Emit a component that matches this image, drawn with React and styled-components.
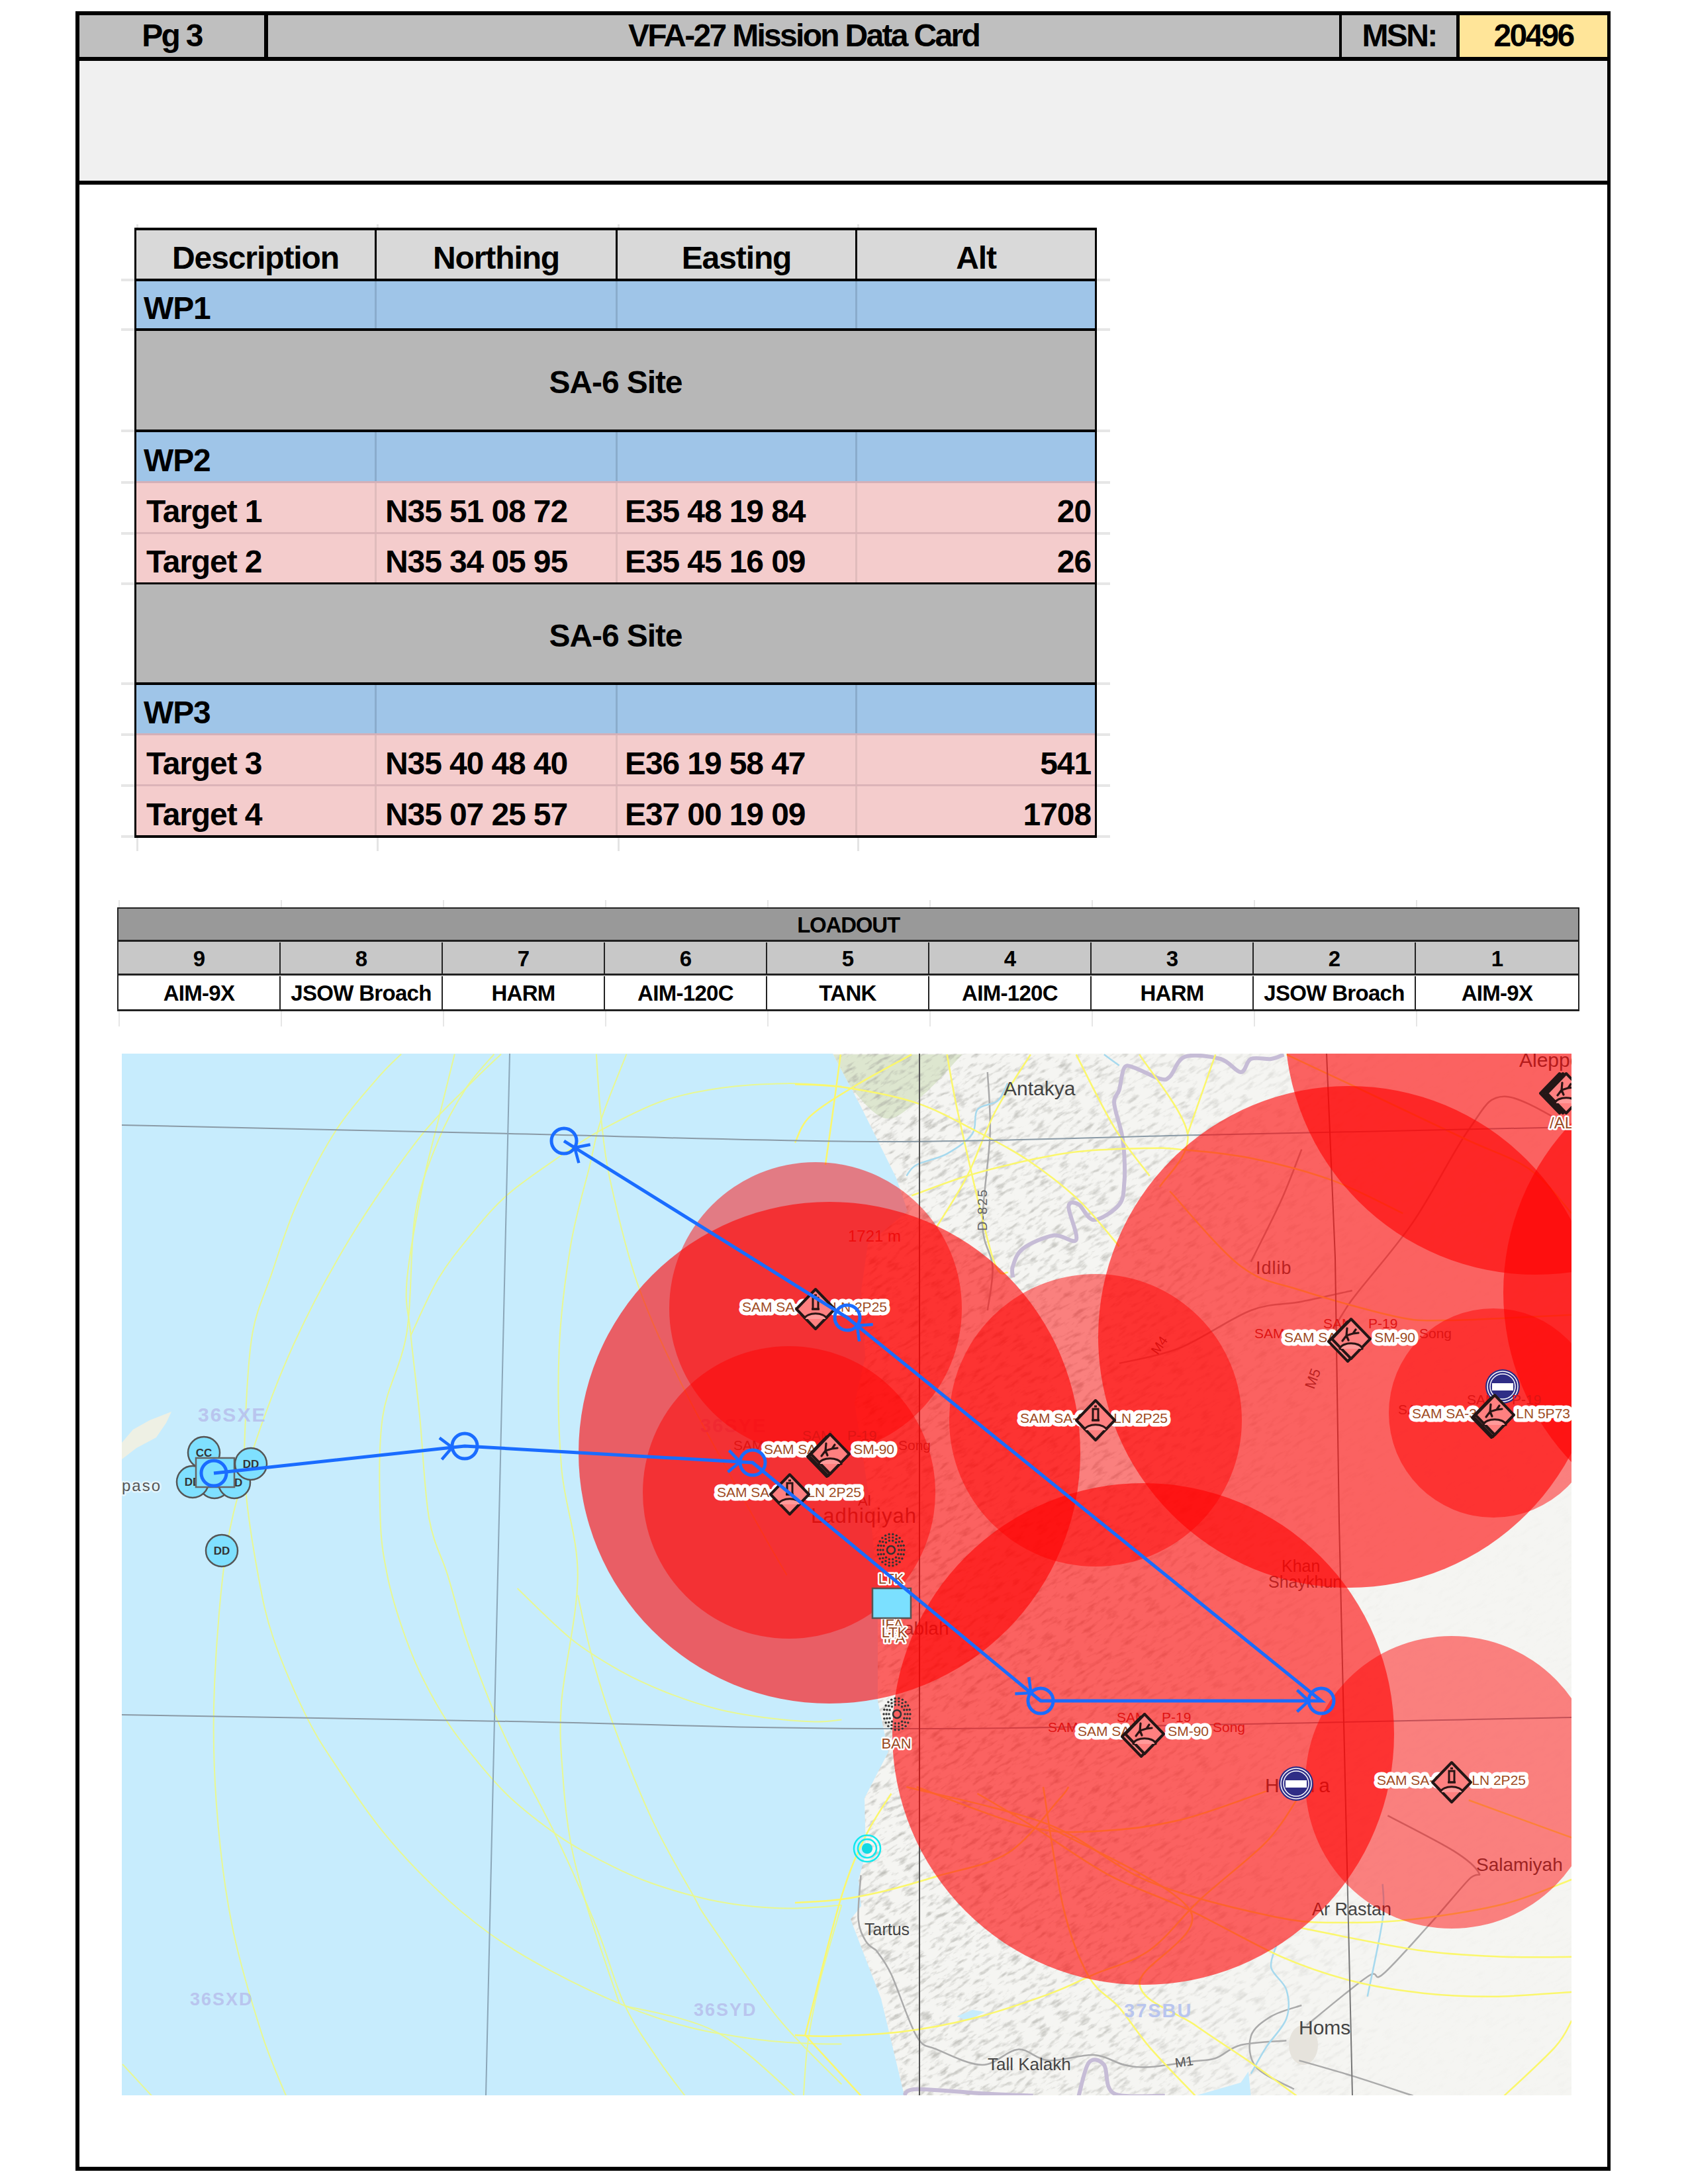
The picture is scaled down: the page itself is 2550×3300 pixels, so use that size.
import React from 'react';
import styled, { createGlobalStyle } from 'styled-components';

const GlobalStyle = createGlobalStyle`
html, body {
  margin: 0;
  padding: 0;
  background: #fff;
}
`;

const Page = styled.div`
width: 2550px;
height: 3300px;
padding: 17px 0 0 114px;
box-sizing: border-box;
font-family: "Liberation Sans", Arial, sans-serif;
color: #000;
`;

const Frame = styled.div`
width: 2319px;
height: 3263px;
box-sizing: border-box;
border: 6px solid #000;
border-right-width: 5px;
background: #fff;
`;

const TitleBar = styled.div`
display: flex;
height: 69px;
box-sizing: border-box;
border-bottom: 6px solid #000;
background: #bfbfbf;
font-size: 48px;
font-weight: bold;
letter-spacing: -2.7px;
`;

const TitleCell = styled.div`
display: flex;
align-items: center;
justify-content: center;
box-sizing: border-box;
padding-bottom: 3px;
flex: ${props => props.$width ? `0 0 ${props.$width}px` : '1'};
border-right: ${props => props.$rule || 0}px solid #000;
background: ${props => props.$bg || 'transparent'};
`;

const NoteBand = styled.div`
height: 187px;
box-sizing: border-box;
border-bottom: 6px solid #000;
background: #f0f0f0;
`;

const tickAt = x => `linear-gradient(#e4e4e4, #e4e4e4) ${x}px 0 / 3px 100% no-repeat`;
const sheetTicks = [0, 363, 727, 1089, 1448].map(tickAt).join(', ');

const Sheet = styled.div`
position: relative;
width: 1454px;
margin: 65px 0 0 83px;
box-sizing: border-box;
border: 3px solid #000;
border-top-width: 4px;
border-bottom: 0;
&::before, &::after {
  content: "";
  position: absolute;
  left: 0;
  right: 0;
  background: ${sheetTicks};
}
&::before { top: -9px; height: 5px; }
&::after { bottom: -20px; height: 20px; }
`;

const Row = styled.div`
position: relative;
display: grid;
grid-template-columns: 363px 364px 362px 359px;
height: ${props => props.$h}px;
box-sizing: border-box;
border-bottom: ${props => props.$lineW || 4}px solid ${props => props.$line || '#000'};
background: ${props => props.$bg};
font-size: 48px;
font-weight: bold;
letter-spacing: -1.1px;
&::before, &::after {
  content: "";
  position: absolute;
  bottom: -4px;
  width: 20px;
  height: 4px;
  background: #e6e6e6;
}
&::before { left: -23px; }
&::after { right: -23px; }
`;

const Cell = styled.div`
position: relative;
display: flex;
align-items: center;
box-sizing: border-box;
padding: 10px ${props => props.$right ? '6px' : '0'} 0 ${props => props.$pad ?? 12}px;
justify-content: ${props => props.$center ? 'center' : props.$right ? 'flex-end' : 'flex-start'};
border-right: 3px solid ${props => props.$rule || 'transparent'};
&:last-child { border-right: 0; }
`;

const Merged = styled.div`
grid-column: 1 / -1;
display: flex;
align-items: center;
justify-content: center;
padding-top: 6px;
`;

const Loadout = styled.div`
position: relative;
width: 2209px;
margin: 105px 0 0 57px;
box-sizing: border-box;
border: 2px solid #222;
border-bottom-width: 3px;
&::before, &::after {
  content: "";
  position: absolute;
  left: 0;
  right: 0;
  background: repeating-linear-gradient(90deg, #e6e6e6 0 2px, transparent 2px 245px);
}
&::before { top: -13px; height: 11px; }
&::after { bottom: -26px; height: 23px; }
`;

const LoadoutHead = styled.div`
height: 50px;
display: flex;
align-items: center;
justify-content: center;
box-sizing: border-box;
padding-top: 2px;
border-bottom: 3px solid #222;
background: #999;
font-size: 33px;
font-weight: bold;
letter-spacing: -1.2px;
`;

const LoadoutRow = styled.div`
display: grid;
grid-template-columns: repeat(9, 1fr);
height: 51px;
box-sizing: border-box;
padding-top: 1px;
border-bottom: ${props => props.$last ? 0 : 3}px solid #222;
background: ${props => props.$bg};
font-size: 33px;
font-weight: bold;
letter-spacing: -0.7px;
`;

const LoadoutCell = styled.div`
display: flex;
align-items: center;
justify-content: center;
padding-top: 2px;
border-right: 2px solid #222;
&:last-child { border-right: 0; }
`;

const MapBox = styled.div`
width: 2190px;
height: 1574px;
margin: 64px 0 0 64px;
overflow: hidden;
`;

const MapSvg = styled.svg`
display: block;
width: 100%;
height: 100%;
font-family: "Liberation Sans", Arial, sans-serif;
`;

const PlaceName = styled.text`
font-size: ${props => props.$size || 28}px;
fill: ${props => props.$fill || '#444'};
letter-spacing: ${props => props.$track || 0}px;
paint-order: stroke;
stroke: ${props => props.$halo || 'none'};
stroke-width: 5px;
stroke-linejoin: round;
`;

const GridName = styled.text`
font-size: ${props => props.$size || 30}px;
font-weight: bold;
letter-spacing: 2px;
fill: ${props => props.$fill || '#b9c5ee'};
`;

const SamLabel = styled.text`
font-size: 21px;
fill: #a04c24;
paint-order: stroke;
stroke: #fff;
stroke-width: 11px;
stroke-linejoin: round;
`;

const GhostLabel = styled.text`
font-size: 21px;
fill: #e01414;
`;

const sea = '#c7ecfd';

// the zoom crops were read off by hand, these turn crop numbers back into page pixels
const z8 = pts => pts.map(([x, y]) => [1200 + x / 1.3067, 1580 + y / 3]);
const z9 = pts => pts.map(([x, y]) => [1200 + x / 1.3067, 2700 + y / 3]);
const z10 = pts => pts.map(([x, y]) => [170 + x / 1.425, 1580 + y / 1.96]);
const z11 = pts => pts.map(([x, y]) => [170 + x / 1.425, 2400 + y / 1.975]);

const smooth = pts => {
  let d = `M${pts[0][0]} ${pts[0][1]}`;
  for (let i = 0; i < pts.length - 1; i++) {
    const p0 = pts[i - 1] || pts[i];
    const p1 = pts[i];
    const p2 = pts[i + 1];
    const p3 = pts[i + 2] || p2;
    const c1x = p1[0] + (p2[0] - p0[0]) / 6;
    const c1y = p1[1] + (p2[1] - p0[1]) / 6;
    const c2x = p2[0] - (p3[0] - p1[0]) / 6;
    const c2y = p2[1] - (p3[1] - p1[1]) / 6;
    d += ` C${c1x} ${c1y} ${c2x} ${c2y} ${p2[0]} ${p2[1]}`;
  }
  return d;
};

const coast = [[1257, 1592], [1300, 1673], [1353, 1780], [1370, 1830], [1310, 1880], [1300, 1950], [1306, 2050], [1290, 2120], [1310, 2250], [1325, 2400], [1325, 2570], [1341, 2647], [1305, 2717], [1307, 2800], [1296, 2840], [1300, 2880], [1284, 2900], [1303, 2950], [1330, 3020], [1365, 3166], [2373, 3166], [2373, 1592]];
const landPoints = coast.map(p => p.join(',')).join(' ');

const seaLines = [
  [...z10([[620, 25], [570, 95], [480, 250], [395, 470], [340, 680], [300, 850], [285, 1100], [285, 1310], [312, 1568]]), ...z11([[345, 150], [415, 380], [480, 530], [580, 725], [690, 890], [810, 1030], [940, 1140], [1100, 1245], [1240, 1310], [1380, 1345], [1490, 1358], [1568, 1360]])],
  [...z10([[835, 25], [760, 125], [655, 280], [510, 570], [390, 880], [300, 1200], [245, 1480]]), ...z11([[218, 290], [222, 640], [255, 1000], [320, 1330], [380, 1540]])],
  [...z10([[735, 25], [700, 220], [665, 420], [632, 700], [640, 850], [660, 1100], [680, 1400], [720, 1568]]), ...z11([[760, 150], [820, 370], [860, 490], [950, 730], [1040, 1010], [1100, 1240], [1170, 1400], [1245, 1540]])],
  [...z10([[820, 25], [760, 125], [700, 280], [650, 500], [632, 850], [580, 1100], [575, 1400], [590, 1568]]), ...z11([[620, 110], [660, 250], [720, 400], [780, 510], [855, 625], [960, 740], [1040, 805], [1140, 870], [1255, 920], [1350, 945], [1460, 955], [1568, 945]])],
  [...z10([[1105, 25], [1050, 220], [1025, 360], [985, 590], [960, 900], [965, 1250], [1000, 1568]]), ...z11([[965, 340], [968, 560], [985, 760], [1020, 950], [1090, 1240]])],
  [...z10([[1040, 25], [1050, 210], [1070, 400], [1130, 710], [1230, 1020], [1380, 1400], [1450, 1568]])],
  z11([[1000, 20], [1030, 200], [1075, 400], [1160, 690], [1250, 920], [1285, 1000], [1430, 1280], [1568, 1480]]),
  z10([[640, 860], [700, 690], [770, 560], [850, 440], [970, 320], [1050, 250], [1180, 165], [1310, 125], [1450, 112], [1568, 120]]),
  z11([[870, 0], [985, 150], [1090, 245], [1190, 310], [1300, 360], [1400, 385], [1510, 398], [1568, 392]]),
  z11([[20, 1420], [100, 1540]]),
  z11([[1568, 945], [1520, 1180], [1495, 1360], [1485, 1540]]),
  z11([[1100, 1245], [1300, 1325], [1480, 1530]]),
];

const landLines = [
  z8([[0, 175], [100, 190], [240, 260], [360, 390], [460, 520], [560, 700], [640, 910]]),
  z8([[0, 440], [30, 320], [120, 180], [230, 40]]),
  z8([[60, 540], [70, 380], [90, 40]]),
  z8([[230, 680], [340, 590], [460, 520], [560, 480], [690, 465], [760, 470], [900, 510], [1060, 610], [1200, 760]]),
  z8([[740, 660], [880, 1000], [1000, 1110], [1190, 1230], [1280, 1245], [1400, 1235], [1533, 1220]]),
  z8([[465, 40], [395, 300], [340, 590], [280, 820]]),
  z8([[555, 40], [630, 370], [700, 590]]),
  z8([[680, 40], [775, 400], [720, 640]]),
  z8([[830, 40], [775, 400]]),
  z8([[970, 40], [1100, 180], [1320, 420], [1450, 560], [1533, 760]]),
  z8([[300, 40], [325, 340], [390, 960], [420, 1030]]),
  z9([[0, 525], [90, 510], [180, 470], [280, 405], [420, 300], [520, 60], [540, 0]]),
  z9([[0, 1125], [70, 1130], [210, 1110], [350, 1050], [500, 940], [590, 850], [700, 740], [800, 510], [930, 250], [990, 60]]),
  z9([[20, 1125], [130, 1400]]),
  z9([[20, 1125], [90, 510], [140, 220], [190, 30]]),
  z9([[240, 0], [460, 180], [600, 200], [760, 150], [930, 20]]),
  z9([[220, 0], [500, 170], [700, 430], [950, 590], [1090, 615], [1220, 600], [1400, 530], [1533, 420]]),
  z9([[490, 0], [530, 550], [580, 860], [640, 1000], [700, 1180], [790, 1400]]),
  z9([[360, 30], [470, 180], [620, 400], [780, 560], [960, 770], [1100, 880], [1240, 935], [1380, 950], [1533, 930]]),
  z9([[500, 180], [780, 560], [680, 890], [790, 1080], [900, 1250], [990, 1400]]),
  z9([[1000, 640], [1230, 740], [1400, 770], [1533, 770]]),
  z9([[1533, 1060], [1500, 1180], [1400, 1400]]),
  z9([[1533, 230], [1330, 60]]),
];

const borderLines = [
  z8([[965, 40], [940, 60], [900, 60], [880, 120], [840, 60], [770, 50], [740, 140], [720, 150], [670, 100], [650, 100], [640, 200], [630, 260], [645, 400], [650, 500], [650, 620], [640, 720], [590, 790], [560, 720], [540, 730], [555, 880], [510, 860], [450, 920], [430, 1000], [430, 1050]]),
  z9([[215, 1400], [240, 1370], [370, 1390], [470, 1400]]),
  z9([[560, 1400], [580, 1250], [610, 1260], [630, 1390], [730, 1400]]),
];

const rivers = [
  z8([[610, 40], [640, 90]]),
  z8([[220, 590], [240, 540], [300, 490], [350, 400], [360, 290], [400, 250], [420, 170]]),
  z9([[1160, 440], [1160, 600], [1130, 950]]),
  z9([[950, 720], [940, 820], [970, 920], [970, 1050], [930, 1180], [900, 1300]]),
];

const roads = [
  z9([[160, 740], [190, 850], [240, 1130], [280, 1190], [370, 1260], [440, 1190], [500, 1240], [590, 1215], [650, 1260], [700, 1270], [780, 1245], [830, 1230], [880, 1170], [970, 1150]]),
  z9([[1000, 990], [940, 1040], [900, 1130], [910, 1270], [985, 1370]]),
  z9([[1010, 1080], [1130, 860], [1160, 850], [1250, 630], [1330, 420], [1350, 390], [1300, 290], [1170, 130]]),
  z9([[995, 1240], [1100, 1310], [1220, 1400]]),
  z9([[130, 400], [125, 600], [140, 700], [160, 740]]),
  z8([[380, 120], [385, 400], [370, 810], [390, 1000], [380, 1200]]),
  z8([[1100, 1110], [1000, 1160], [900, 1200], [760, 1370], [640, 1440]]),
  z8([[900, 980], [960, 700], [1000, 470]]),
  z8([[1533, 370], [1400, 230], [1330, 380], [1220, 800], [1100, 1150], [1060, 1300]]),
];

const route = [[322, 2226], [701, 2185], [1136, 2210], [1571, 2570], [1995, 2570], [1279, 1991], [851, 1724]];

const bigZones = [[1252, 2195], [2037, 2020], [2319, 1547], [2640, 1953], [1726, 2620]];
const smallZones = [[1231, 1977], [1191, 2255], [1654, 2146], [2255, 2135], [2192, 2693]];

const samSites = [
  { x: 1654, y: 2146, ly: 2142, lx: -114, rx: 109, left: 'SAM SA-6', right: 'LN 2P25' },
  { x: 2192, y: 2693, ly: 2689, lx: -113, rx: 112, left: 'SAM SA-6', right: 'LN 2P25' },
  { x: 2040, y: 2023, ly: 2020, lx: -101, rx: 97, left: 'SAM SA', right: 'SM-90', missile: true, ghost: true },
  { x: 1728, y: 2620, ly: 2615, lx: -101, rx: 97, left: 'SAM SA', right: 'SM-90', missile: true, ghost: true },
  { x: 1253, y: 2197, ly: 2189, lx: -100, rx: 97, left: 'SAM SA', right: 'SM-90', missile: true, ghost: true, stack: true },
  { x: 1192, y: 2258, ly: 2254, lx: -110, rx: 108, left: 'SAM SA-6', right: 'LN 2P25' },
  { x: 1231, y: 1978, ly: 1974, lx: -111, rx: 108, left: 'SAM SA-6', right: 'LN 2P25' },
  { x: 2257, y: 2138, ly: 2135, lx: -125, rx: 114, left: 'SAM SA-3', right: 'LN 5P73', missile: true, ghost: true, stack: true },
];

const TowerGlyph = () => (
  <g fill="none" stroke="#2a1414" strokeWidth="3">
    <rect x="-4" y="-17" width="8" height="17" />
    <path d="M-6 0 H6 M-2 -21 H2" />
    <path d="M-17 15 C-14 4 14 4 17 15" fill="#ff9a9a" />
  </g>
);

const MissileGlyph = () => (
  <g fill="none" stroke="#2a1414" strokeWidth="3.2" strokeLinecap="round">
    <path d="M-13 3 L-7 -5 L-6 -16 M-7 -5 L3 -8 L7 -14 M-7 -5 L-4 2 M3 -8 L11 -9" />
    <path d="M-17 15 C-14 4 14 4 17 15" fill="#ff9a9a" />
  </g>
);

const Diamond = ({ dx = 0, dy = 0 }) => (
  <path d={`M${dx} ${dy - 30} L${dx + 29} ${dy} L${dx} ${dy + 30} L${dx - 29} ${dy} Z`} fill="#ff8080" stroke="#241616" strokeWidth="4" strokeLinejoin="round" />
);

const SamSite = ({ x, y, ly, lx, rx, left, right, missile, ghost, stack }) => (
  <g>
    {ghost && (
      <>
        <GhostLabel x={x - 146} y={ly + 2}>SAM</GhostLabel>
        <GhostLabel x={x - 42} y={ly - 13}>SAM</GhostLabel>
        <GhostLabel x={x + 26} y={ly - 13}>P-19</GhostLabel>
        <GhostLabel x={x + 103} y={ly + 2}>Song</GhostLabel>
      </>
    )}
    <SamLabel x={x + lx} y={ly + 8}>{left}</SamLabel>
    <SamLabel x={x + rx} y={ly + 8} textAnchor="end">{right}</SamLabel>
    <g transform={`translate(${x} ${y})`}>
      {missile && <Diamond dx={-5} dy={4} />}
      {stack && <Diamond dx={-3} dy={3} />}
      <Diamond />
      {missile ? <MissileGlyph /> : <TowerGlyph />}
    </g>
  </g>
);

const RadarDots = ({ x, y }) => {
  const dots = [];
  [[12, 14], [16, 18], [20, 22]].forEach(([r, n]) => {
    for (let i = 0; i < n; i++) {
      const a = (i / n) * Math.PI * 2;
      dots.push(<circle key={`${r}-${i}`} cx={x + Math.cos(a) * r} cy={y + Math.sin(a) * r * 1.2} r="1.7" fill="#333" />);
    }
  });
  return (
    <g>
      {dots}
      <circle cx={x} cy={y} r="6" fill="none" stroke="#333" strokeWidth="2.5" />
    </g>
  );
};

const NoEntry = ({ x, y }) => (
  <g>
    <circle cx={x} cy={y} r="26" fill="#2f2d86" />
    <circle cx={x} cy={y} r="23" fill="none" stroke="#fff" strokeWidth="1.5" />
    <circle cx={x} cy={y} r="19" fill="none" stroke="#fff" strokeWidth="1.5" />
    <rect x={x - 16} y={y - 5} width="32" height="11" fill="#fff" />
  </g>
);

const Shelter = ({ x, y, text }) => (
  <g>
    <circle cx={x} cy={y} r="24" fill="#7fe0ff" stroke="#555" strokeWidth="2.5" />
    <text x={x} y={y + 6} textAnchor="middle" fontSize="17" fontWeight="bold" fill="#333">{text}</text>
  </g>
);

const RouteArrow = ({ from, to }) => {
  const len = Math.hypot(to[0] - from[0], to[1] - from[1]);
  const ux = (to[0] - from[0]) / len;
  const uy = (to[1] - from[1]) / len;
  const tipX = to[0] - ux * 19;
  const tipY = to[1] - uy * 19;
  const wing = sign => {
    const a = sign * 0.75;
    const wx = -(ux * Math.cos(a) - uy * Math.sin(a));
    const wy = -(ux * Math.sin(a) + uy * Math.cos(a));
    return `${tipX + wx * 24} ${tipY + wy * 24}`;
  };
  return <path d={`M${wing(1)} L${tipX} ${tipY} L${wing(-1)}`} fill="none" stroke="#1a6cff" strokeWidth="4.5" />;
};

const MissionMap = () => (
  <MapSvg viewBox="183 1592 2190 1574">
    <defs>
      <clipPath id="land"><polygon points={landPoints} /></clipPath>
      <filter id="terrain" x="0" y="0" width="100%" height="100%">
        <feTurbulence type="fractalNoise" baseFrequency="0.05 0.16" numOctaves="4" seed="7" />
        <feColorMatrix values="0 0 0 0 0.36  0 0 0 0 0.36  0 0 0 0 0.33  0 0 0 3 -1.5" />
      </filter>
      <linearGradient id="relief" x1="1250" x2="2100" y1="0" y2="0" gradientUnits="userSpaceOnUse">
        <stop offset="0" stopColor="#fff" stopOpacity="0.65" />
        <stop offset="0.5" stopColor="#fff" stopOpacity="0.5" />
        <stop offset="1" stopColor="#fff" stopOpacity="0.03" />
      </linearGradient>
      <mask id="reliefMask" maskUnits="userSpaceOnUse" x="183" y="1592" width="2190" height="1574">
        <rect x="183" y="1592" width="2190" height="1574" fill="url(#relief)" />
      </mask>
    </defs>

    <rect x="183" y="1592" width="2190" height="1574" fill={sea} />
    <polygon points={landPoints} fill="#f5f5f2" />
    <path d="M183 2205 L183 2180 L200 2160 L225 2146 L258 2133 L250 2150 L235 2172 L205 2188 Z" fill="#eef0e4" />
    <g clipPath="url(#land)">
      <path d={smooth(z8([[70, 40], [110, 190], [180, 330], [250, 230], [330, 40]]))} fill="#dde6cf" />
      <g mask="url(#reliefMask)">
        <rect x="-200" y="1200" width="3200" height="2600" filter="url(#terrain)" transform="rotate(-32 1500 2400)" />
      </g>
    </g>
    <polygon points={z9([[790, 1400], [880, 1340], [895, 1290], [900, 1400]]).map(p => p.join(',')).join(' ')} fill={sea} />
    <polygon points={z9([[320, 1040], [350, 1010], [375, 1020], [340, 1060]]).map(p => p.join(',')).join(' ')} fill={sea} />
    <ellipse cx="1968" cy="3090" rx="22" ry="30" fill="#e6e3dc" />

    {roads.map((pts, i) => <path key={i} d={smooth(pts)} fill="none" stroke="#aaa" strokeWidth="2.5" />)}
    {rivers.map((pts, i) => <path key={i} d={smooth(pts)} fill="none" stroke="#a6d9ee" strokeWidth="2.5" />)}
    {borderLines.map((pts, i) => <path key={i} d={smooth(pts)} fill="none" stroke="#c6bcd6" strokeWidth="6" />)}
    {seaLines.map((pts, i) => <path key={i} d={smooth(pts)} fill="none" stroke="#e8f892" strokeWidth="2" />)}
    {landLines.map((pts, i) => <path key={i} d={smooth(pts)} fill="none" stroke="#fbf76c" strokeWidth="2.5" />)}

    <path d={smooth([[183, 1700], [769, 1713], [1330, 1725], [1812, 1715], [2373, 1703]])} fill="none" stroke="#8a9aa6" strokeWidth="2" />
    <path d={smooth([[183, 2591], [770, 2601], [1400, 2612], [2373, 2595]])} fill="none" stroke="#8a9aa6" strokeWidth="2" />
    <path d="M769 1592 L733 3166" stroke="#8ba6b8" strokeWidth="2" />
    <path d="M1388 1592 V3166" stroke="#555" strokeWidth="2" />
    <path d="M2003 1592 L2016 1900 L2022 2300 L2042 3166" stroke="#777" strokeWidth="2" fill="none" />

    <GridName x="298" y="2148">36SXE</GridName>
    <GridName x="286" y="3030" $size={27}>36SXD</GridName>
    <GridName x="1047" y="3046" $size={27}>36SYD</GridName>
    <GridName x="1697" y="3048" $size={29}>37SBU</GridName>
    <GridName x="1057" y="2164" $size={29}>36SYE</GridName>
    <PlaceName x="183" y="2253" $size={24} $fill="#555" $track={2} $halo="#e4f5fd">paso</PlaceName>
    <PlaceName x="1515" y="1655" $size={30}>Antakya</PlaceName>
    <PlaceName x="1490" y="1860" $size={20} transform="rotate(-90 1490 1860)" $fill="#666" $track={2}>D-825</PlaceName>
    <PlaceName x="1280" y="1876" $size={24} $fill="#b04040">1721 m</PlaceName>
    <PlaceName x="1896" y="1925" $size={27} $fill="#555" $track={1}>Idlib</PlaceName>
    <PlaceName x="1748" y="2048" $size={20} $fill="#555" transform="rotate(-55 1748 2048)">M4</PlaceName>
    <PlaceName x="1984" y="2100" $size={22} $fill="#555" transform="rotate(-70 1984 2100)">M5</PlaceName>
    <PlaceName x="1295" y="2275" $size={22} $fill="#555">Al</PlaceName>
    <PlaceName x="1224" y="2301" $size={31} $fill="#555" $track={1}>Ladhiqiyah</PlaceName>
    <PlaceName x="1935" y="2375" $size={25} $fill="#555">Khan</PlaceName>
    <PlaceName x="1915" y="2399" $size={25} $fill="#555">Shaykhun</PlaceName>
    <PlaceName x="1350" y="2470" $size={28} $fill="#555">Jablah</PlaceName>
    <PlaceName x="1910" y="2708" $size={30} $fill="#444" $track={6}>Hama</PlaceName>
    <PlaceName x="2229" y="2827" $size={28} $fill="#444">Salamiyah</PlaceName>
    <PlaceName x="1981" y="2894" $size={27}>Ar Rastan</PlaceName>
    <PlaceName x="1305" y="2924" $size={25}>Tartus</PlaceName>
    <PlaceName x="1961" y="3074" $size={30}>Homs</PlaceName>
    <PlaceName x="1491" y="3128" $size={26}>Tall Kalakh</PlaceName>
    <PlaceName x="1775" y="3124" $size={20} $fill="#555" transform="rotate(-8 1775 3124)">M1</PlaceName>
    <PlaceName x="2294" y="1612" $size={30} $fill="#444">Aleppo</PlaceName>

    {bigZones.map(([cx, cy]) => <circle key={cx} cx={cx} cy={cy} r={cx === 2640 ? 370 : 379} fill="#ff0000" fillOpacity="0.6" />)}
    {smallZones.map(([cx, cy]) => <circle key={cx} cx={cx} cy={cy} r={cx === 2255 ? 158 : 221} fill="#ff0000" fillOpacity="0.48" />)}

    <Shelter x={323} y={2240} text="DD" />
    <Shelter x={353} y={2240} text="DD" />
    <Shelter x={307} y={2195} text="CC" />
    <Shelter x={290} y={2239} text="DD" />
    <rect x="295" y="2203" width="58" height="44" fill="#7fe0ff" stroke="#666" strokeWidth="2.5" />
    <Shelter x={378} y={2212} text="DD" />
    <Shelter x={334} y={2343} text="DD" />

    <RadarDots x={1345} y={2342} />
    <PlaceName x="1345" y="2393" $size={22} $fill="#9a4a22" $halo="#fff" textAnchor="middle">LTK</PlaceName>
    <PlaceName x="1347" y="2462" $size={22} $fill="#9a4a22" $halo="#fff" textAnchor="middle">IFA</PlaceName>
    <PlaceName x="1350" y="2482" $size={22} $fill="#9a4a22" $halo="#fff" textAnchor="middle">IFA</PlaceName>
    <PlaceName x="1350" y="2474" $size={22} $fill="#9a4a22" $halo="#fff" textAnchor="middle">LTK</PlaceName>
    <rect x="1317" y="2400" width="58" height="45" fill="#7be0ff" stroke="#555" strokeWidth="2.5" />
    <RadarDots x={1354} y={2590} />
    <PlaceName x="1353" y="2642" $size={22} $fill="#9a4a22" $halo="#fff" textAnchor="middle">BAN</PlaceName>

    <g fill="none" stroke="#12e9ee" strokeWidth="2.5">
      <circle cx="1309" cy="2793" r="20" />
      <circle cx="1309" cy="2793" r="14" />
    </g>
    <circle cx="1309" cy="2793" r="8" fill="#12d9e2" />

    <NoEntry x={1957} y={2695} />
    <NoEntry x={2269} y={2095} />

    {samSites.map(site => <SamSite key={site.x} {...site} />)}
    <g transform="translate(2365 1652)">
      <Diamond dx={-10} dy={0} />
      <Diamond dx={-5} dy={0} />
      <Diamond />
      <MissileGlyph />
    </g>
    <PlaceName x="2340" y="1705" $size={24} $fill="#9a4a22" $halo="#fff">/ALE</PlaceName>

    <polyline points={route.map(p => p.join(',')).join(' ')} fill="none" stroke="#1a6cff" strokeWidth="5" />
    {route.map(([cx, cy]) => <circle key={cx} cx={cx} cy={cy} r="19" fill="none" stroke="#1a6cff" strokeWidth="5" />)}
    {route.slice(1).map((p, i) => <RouteArrow key={p[0]} from={route[i]} to={p} />)}
  </MapSvg>
);

const targets = [
  ['Target 1', 'N35 51 08 72', 'E35 48 19 84', '20'],
  ['Target 2', 'N35 34 05 95', 'E35 45 16 09', '26'],
  ['Target 3', 'N35 40 48 40', 'E36 19 58 47', '541'],
  ['Target 4', 'N35 07 25 57', 'E37 00 19 09', '1708'],
];

const stations = [
  ['9', 'AIM-9X'], ['8', 'JSOW Broach'], ['7', 'HARM'], ['6', 'AIM-120C'], ['5', 'TANK'],
  ['4', 'AIM-120C'], ['3', 'HARM'], ['2', 'JSOW Broach'], ['1', 'AIM-9X'],
];

const WaypointRow = ({ name, h, line }) => (
  <Row $h={h} $bg="#9fc5e8" $line={line} $lineW={line ? 3 : 4}>
    <Cell $pad={11} $rule="#8aaccc">{name}</Cell>
    <Cell $rule="#8aaccc" />
    <Cell $rule="#8aaccc" />
    <Cell />
  </Row>
);

const TargetRow = ({ data, h, line }) => (
  <Row $h={h} $bg="#f4cccc" $line={line} $lineW={line ? 3 : 4}>
    <Cell $rule="#e0bcbc" $pad={15}>{data[0]}</Cell>
    <Cell $rule="#e0bcbc" $pad={13}>{data[1]}</Cell>
    <Cell $rule="#e0bcbc" $pad={11}>{data[2]}</Cell>
    <Cell $right>{data[3]}</Cell>
  </Row>
);

const SiteRow = ({ h }) => (
  <Row $h={h} $bg="#b7b7b7">
    <Merged>SA-6 Site</Merged>
  </Row>
);

export default function App() {
  return (
    <>
      <GlobalStyle />
      <Page>
        <Frame>
          <TitleBar>
            <TitleCell $width={285} $rule={6}>Pg 3</TitleCell>
            <TitleCell $rule={4}>VFA-27 Mission Data Card</TitleCell>
            <TitleCell $width={178} $rule={5}>MSN:</TitleCell>
            <TitleCell $width={223} $bg="#ffe599">20496</TitleCell>
          </TitleBar>
          <NoteBand />
          <Sheet>
            <Row $h={77} $bg="#d9d9d9">
              {['Description', 'Northing', 'Easting', 'Alt'].map(head => (
                <Cell key={head} $center $pad={0} $rule="#000">{head}</Cell>
              ))}
            </Row>
            <WaypointRow name="WP1" h={75} />
            <SiteRow h={153} />
            <WaypointRow name="WP2" h={77} line="#d4b0b8" />
            <TargetRow data={targets[0]} h={77} line="#dcb4b8" />
            <TargetRow data={targets[1]} h={76} line="#000" />
            <SiteRow h={152} />
            <WaypointRow name="WP3" h={76} line="#d4b0b8" />
            <TargetRow data={targets[2]} h={77} line="#dcb4b8" />
            <TargetRow data={targets[3]} h={78} />
          </Sheet>
          <Loadout>
            <LoadoutHead>LOADOUT</LoadoutHead>
            <LoadoutRow $bg="#c8c8c8">
              {stations.map(st => <LoadoutCell key={st[0]}>{st[0]}</LoadoutCell>)}
            </LoadoutRow>
            <LoadoutRow $bg="#fff" $last>
              {stations.map(st => <LoadoutCell key={st[0]}>{st[1]}</LoadoutCell>)}
            </LoadoutRow>
          </Loadout>
          <MapBox>
            <MissionMap />
          </MapBox>
        </Frame>
      </Page>
    </>
  );
}
